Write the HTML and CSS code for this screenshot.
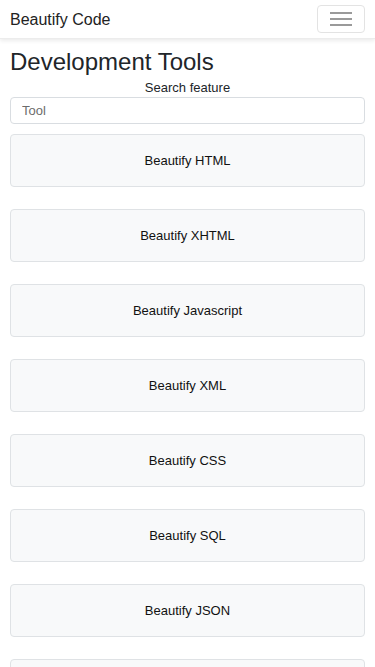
FILE: index.html
```html
<!DOCTYPE html>
<html lang="en">
<head>
    <meta charset="UTF-8">
    <meta name="viewport" content="width=device-width, initial-scale=1.0">
    <title>Beautify Code</title>
    <link rel="stylesheet" href="styles.css">
</head>
<body>

    <!-- Top navigation bar -->
    <nav class="navbar">
        <span class="brand">Beautify Code</span>
        <button type="button" class="toggler" aria-label="Menu">
            <svg width="22" height="14" viewBox="0 0 22 14">
                <path d="M0 1h22M0 7h22M0 13h22" stroke="#7a7a7a" stroke-width="1.5"/>
            </svg>
        </button>
    </nav>

    <div class="container">
        <h1>Development Tools</h1>

        <label for="search" class="search-label">Search feature</label>
        <input type="text" id="search" placeholder="Tool">

        <!-- List of tools -->
        <div class="tool-list">
            <a class="tool" href="#">Beautify HTML</a>
            <a class="tool" href="#">Beautify XHTML</a>
            <a class="tool" href="#">Beautify Javascript</a>
            <a class="tool" href="#">Beautify XML</a>
            <a class="tool" href="#">Beautify CSS</a>
            <a class="tool" href="#">Beautify SQL</a>
            <a class="tool" href="#">Beautify JSON</a>
            <a class="tool" href="#">Beautify YAML</a>
        </div>
    </div>

</body>
</html>
```

FILE: styles.css
```css
html, body {
    margin: 0;
    font-family: "Liberation Sans", Arial, sans-serif;
    color: #212529;
    background-color: #fff;
}

/* Navbar with a soft shadow */
.navbar {
    display: flex;
    justify-content: space-between;
    align-items: center;
    height: 39px;
    padding: 0 10px;
    box-shadow: 0 2px 4px rgba(0, 0, 0, 0.08);
    border-bottom: 1px solid #ececec;
    box-sizing: border-box;
}

.brand {
    font-size: 16px;
    padding-top: 2px;
    color: #222;
}

.toggler {
    display: flex;
    align-items: center;
    justify-content: center;
    width: 48px;
    height: 28px;
    margin-top: -1px;
    padding: 0;
    background: #fff;
    border: 1px solid #e3e3e3;
    border-radius: 4px;
}

.container {
    display: flex;
    flex-direction: column;
    padding: 0 10px;
}

h1 {
    margin: 9px 0 3px;
    font-size: 24px;
    font-weight: normal;
    line-height: 1.2;
}

.search-label {
    text-align: center;
    font-size: 13px;
    line-height: 15px;
    margin-bottom: 2px;
}

input[type="text"] {
    height: 27px;
    padding: 0 11px;
    font-family: inherit;
    font-size: 13px;
    color: #495057;
    border: 1px solid #d9dde1;
    border-radius: 4px;
    box-sizing: border-box;
}

input::placeholder {
    color: #6c6c6c;
}

.tool-list {
    display: flex;
    flex-direction: column;
    gap: 22px;
    margin-top: 10px;
}

.tool {
    display: flex;
    align-items: center;
    justify-content: center;
    height: 53px;
    box-sizing: border-box;
    background-color: #f8f9fa;
    border: 1px solid #dfe2e5;
    border-radius: 4px;
    font-size: 13px;
    color: #111;
    text-decoration: none;
}
```
